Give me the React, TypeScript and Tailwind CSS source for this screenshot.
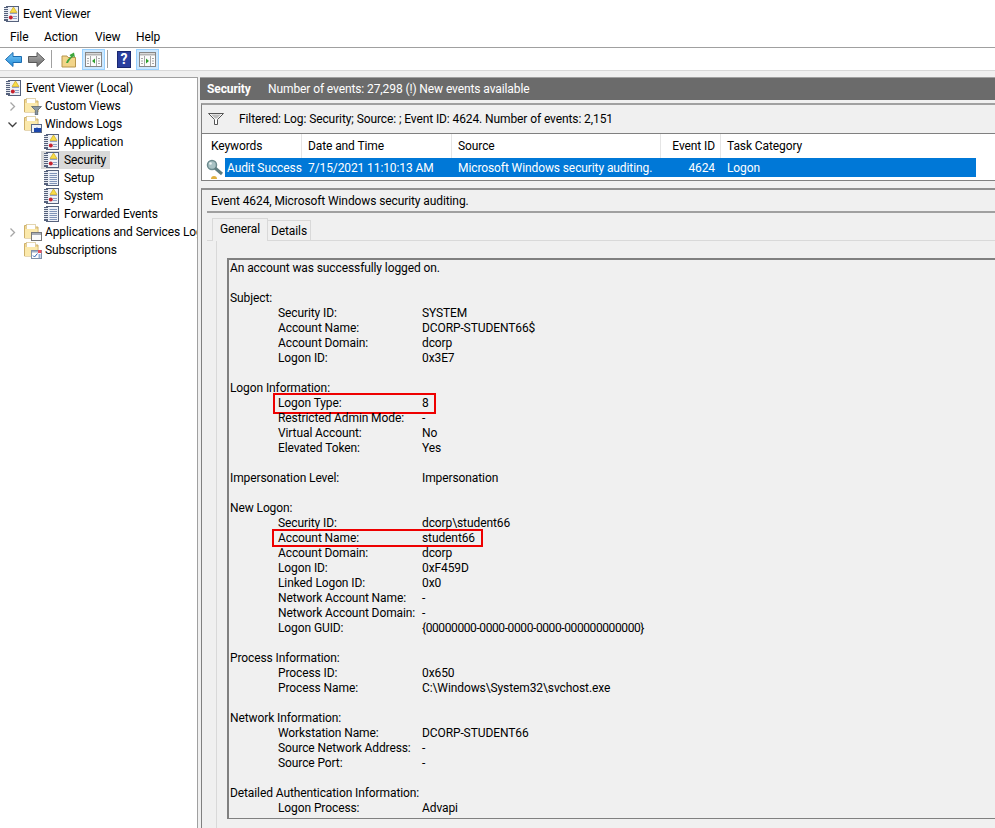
import type { ReactNode } from 'react'

const font = 'font-["Roboto","Noto_Sans",sans-serif]'

function LogBook({ alert = true }: { alert?: boolean }) {
  return (
    <svg width="15" height="16" viewBox="0 0 15 16" className="shrink-0">
      <rect x="2.500" y="0.500" width="12" height="15" fill="#eef1f7" stroke="#55617c" />
      <rect x="0" y="1" width="4" height="14" fill="#55617c" />
      <path d="M0 2.500h4M0 4.500h4M0 6.500h4M0 8.500h4M0 10.500h4M0 12.500h4" stroke="#e6e9ef" />
      {alert ? (
        <>
          <path d="M6 7.500h7M9 10.500h4M9 12.500h4" stroke="#93a3c4" />
          <path d="M9.500 1l3.500 5.500H6z" fill="#f8dc46" stroke="#c8a626" strokeWidth="0.700" />
          <circle cx="6.800" cy="11.500" r="2" fill="#c5222f" />
        </>
      ) : (
        <path d="M5.500 3.500h7.500M5.500 5.500h7.500M5.500 7.500h7.500M5.500 9.500h7.500M5.500 11.500h7.500M5.500 13.500h7.500" stroke="#7f93b8" />
      )}
    </svg>
  )
}

function Folder({ overlay }: { overlay: 'filter' | 'log' | 'window' | 'task' }) {
  return (
    <svg width="18" height="18" viewBox="0 0 18 18" className="shrink-0">
      <path d="M0.500 2.500h7l1 1.500h5.500v11H0.500z" fill="#f5d98e" stroke="#cdb06a" />
      <rect x="2.500" y="1.500" width="9" height="7" fill="#fff" stroke="#d8c48e" strokeWidth="0.700" />
      <rect x="1" y="6" width="12.500" height="9" fill="#fbe9ac" />
      {overlay === 'filter' && (
        <path d="M7.500 9.500h10l-3.800 3.800V18h-2.400v-4.700z" fill="#8b98a3" stroke="#4e5a66" strokeWidth="0.700" />
      )}
      {overlay === 'log' && (
        <>
          <rect x="7.500" y="9.500" width="10" height="8" fill="#f0f2f7" stroke="#5a6a88" />
          <path d="M10 17l3-5 3 5z" fill="#1c47ad" />
          <rect x="10" y="13" width="7" height="4" fill="#1c47ad" />
        </>
      )}
      {overlay === 'window' && (
        <>
          <rect x="7.500" y="9.500" width="10" height="8" fill="#fafafa" stroke="#777" />
          <rect x="8" y="10" width="9" height="2" fill="#a8adb5" />
        </>
      )}
      {overlay === 'task' && (
        <>
          <rect x="7.500" y="9.500" width="10" height="8" fill="#fff" stroke="#8090a8" />
          <rect x="8" y="10" width="6" height="1.500" fill="#9fb0c8" />
          <rect x="14" y="9" width="3.500" height="3" fill="#e8505c" />
          <path d="M9 14.500l1.500 1.500 3-3.500M14.500 14h2M14.500 16h2" stroke="#2a5fb0" fill="none" />
        </>
      )}
    </svg>
  )
}

function Chevron({ open }: { open?: boolean }) {
  return (
    <svg width="9" height="9" viewBox="0 0 9 9" className="shrink-0">
      {open ? (
        <path d="M0.500 2.500l4 4 4-4" stroke="#404040" strokeWidth="1.300" fill="none" />
      ) : (
        <path d="M2.500 0.500l4 4-4 4" stroke="#a6a6a6" strokeWidth="1.300" fill="none" />
      )}
    </svg>
  )
}

function PaneToggle({ arrow }: { arrow: 'left' | 'right' }) {
  return (
    <div className="w-[23px] h-[21px] flex items-center justify-center bg-[#cce8ff] border border-[#99d1ff]">
      <svg width="17" height="15" viewBox="0 0 17 15">
        <rect x="0.500" y="0.500" width="16" height="14" fill="#fbfbfb" stroke="#868686" />
        <path d="M1 2.500h15" stroke="#b4b4b4" strokeWidth="2" />
        <path d="M5.500 4v10M11.500 4v10" stroke="#a8a8a8" />
        {arrow === 'left' ? <path d="M10 6.500v5L7 9z" fill="#2ca02c" /> : <path d="M7 6.500v5L10 9z" fill="#2ca02c" />}
        <path d="M2 6.500h2M2 9h2M2 11.500h2M13 6.500h2M13 9h2M13 11.500h2" stroke="#a8a8a8" />
      </svg>
    </div>
  )
}

function FolderRow({ chevron, icon, label }: { chevron?: 'open' | 'closed'; icon: ReactNode; label: string }) {
  return (
    <div className="h-[18px] flex items-center whitespace-nowrap pl-[8px]">
      <div className="w-[16px] shrink-0">{chevron && <Chevron open={chevron === 'open'} />}</div>
      <div className="w-[21px] shrink-0">{icon}</div>
      <span>{label}</span>
    </div>
  )
}

function LogRow({ alert, label, selected }: { alert?: boolean; label: string; selected?: boolean }) {
  return (
    <div className="h-[18px] flex whitespace-nowrap pl-[41px]">
      <div className={`flex items-center pl-[3px] pr-[4px] ${selected ? 'bg-[#d9d9d9]' : ''}`}>
        <div className="w-[20px] shrink-0">
          <LogBook alert={alert} />
        </div>
        <span>{label}</span>
      </div>
    </div>
  )
}

type Line = { t?: string; k?: string; v?: string; box?: string; tight?: boolean }

const lines: Line[] = [
  { t: 'An account was successfully logged on.' },
  {},
  { t: 'Subject:' },
  { k: 'Security ID:', v: 'SYSTEM' },
  { k: 'Account Name:', v: 'DCORP-STUDENT66$' },
  { k: 'Account Domain:', v: 'dcorp' },
  { k: 'Logon ID:', v: '0x3E7' },
  {},
  { t: 'Logon Information:' },
  { k: 'Logon Type:', v: '8', box: 'left-[43px] w-[163px] -top-[3px] h-[21px]' },
  { k: 'Restricted Admin Mode:', v: '-' },
  { k: 'Virtual Account:', v: 'No' },
  { k: 'Elevated Token:', v: 'Yes' },
  {},
  { t: 'Impersonation Level:', v: 'Impersonation' },
  {},
  { t: 'New Logon:' },
  { k: 'Security ID:', v: 'dcorp\\student66' },
  { k: 'Account Name:', v: 'student66', box: 'left-[42px] w-[211px] -top-[2px] h-[18px]' },
  { k: 'Account Domain:', v: 'dcorp' },
  { k: 'Logon ID:', v: '0xF459D' },
  { k: 'Linked Logon ID:', v: '0x0' },
  { k: 'Network Account Name:', v: '-' },
  { k: 'Network Account Domain:', v: '-' },
  { k: 'Logon GUID:', v: '{00000000-0000-0000-0000-000000000000}', tight: true },
  {},
  { t: 'Process Information:' },
  { k: 'Process ID:', v: '0x650' },
  { k: 'Process Name:', v: 'C:\\Windows\\System32\\svchost.exe' },
  {},
  { t: 'Network Information:' },
  { k: 'Workstation Name:', v: 'DCORP-STUDENT66' },
  { k: 'Source Network Address:', v: '-' },
  { k: 'Source Port:', v: '-' },
  {},
  { t: 'Detailed Authentication Information:' },
  { k: 'Logon Process:', v: 'Advapi' },
]

export default function App() {
  return (
    <div className={`w-[995px] h-[828px] overflow-hidden bg-[#f0f0f0] text-[12px] tracking-[-0.1px] text-black flex flex-col ${font}`}>
      <div className="h-[27px] bg-white flex items-center pl-[4px] gap-[4px] shrink-0">
        <LogBook />
        <span>Event Viewer</span>
      </div>
      <div className="h-[20px] bg-white flex items-center pl-[10px] shrink-0">
        <span className="w-[34px]">File</span>
        <span className="w-[51px]">Action</span>
        <span className="w-[41px]">View</span>
        <span>Help</span>
      </div>
      <div className="h-[24px] bg-white border-t border-[#a0a0a0] border-b border-b-[#d8d8d8] flex items-center pl-[5px] shrink-0">
        <svg width="17" height="15" viewBox="0 0 17 15">
          <defs>
            <linearGradient id="backFill" x1="0" y1="0" x2="0" y2="1">
              <stop offset="0" stopColor="#7cc8f5" />
              <stop offset="1" stopColor="#1f8ad8" />
            </linearGradient>
          </defs>
          <path d="M8 0.500L0.500 7.500 8 14.500V10.500h8.500v-6H8z" fill="url(#backFill)" stroke="#1c6cb0" />
        </svg>
        <svg width="17" height="15" viewBox="0 0 17 15" className="ml-[6px]">
          <defs>
            <linearGradient id="forwardFill" x1="0" y1="0" x2="0" y2="1">
              <stop offset="0" stopColor="#b0b0b0" />
              <stop offset="1" stopColor="#6c6c6c" />
            </linearGradient>
          </defs>
          <path d="M9 0.500l7.500 7L9 14.500V10.500H0.500v-6H9z" fill="url(#forwardFill)" stroke="#595959" />
        </svg>
        <div className="w-px h-[18px] bg-[#a0a0a0] ml-[6px]" />
        <svg width="16" height="17" viewBox="0 0 16 17" className="ml-[9px]">
          <path d="M1 5h5l1 1.500h7.500V16H1z" fill="#f2d58a" stroke="#b8964c" />
          <path d="M5 12c1-3 2.500-5 5-6L8.500 4 13 1.500 14 6.500l-1.800-1C10 7.500 8 9.500 7 12z" fill="#3da63d" />
        </svg>
        <div className="ml-[5px]">
          <PaneToggle arrow="left" />
        </div>
        <div className="w-px h-[18px] bg-[#a0a0a0] ml-[2px]" />
        <div className="w-[14px] h-[17px] ml-[9px] bg-[#2b3f9e] border border-[#1a2870] text-white font-bold text-[14px] leading-[15px] text-center">?</div>
        <div className="ml-[5px]">
          <PaneToggle arrow="right" />
        </div>
      </div>

      <div className="flex-1 flex min-h-0 pt-[6px]">
        <div className="w-[198px] shrink-0 bg-white border-t border-r border-[#a0a0a0] pt-[1px] overflow-hidden">
          <div className="h-[18px] flex items-center whitespace-nowrap pl-[6px]">
            <div className="w-[20px] shrink-0">
              <LogBook />
            </div>
            <span>Event Viewer (Local)</span>
          </div>
          <FolderRow chevron="closed" icon={<Folder overlay="filter" />} label="Custom Views" />
          <FolderRow chevron="open" icon={<Folder overlay="log" />} label="Windows Logs" />
          <LogRow label="Application" />
          <LogRow label="Security" selected />
          <LogRow alert={false} label="Setup" />
          <LogRow label="System" />
          <LogRow alert={false} label="Forwarded Events" />
          <FolderRow chevron="closed" icon={<Folder overlay="window" />} label="Applications and Services Logs" />
          <FolderRow icon={<Folder overlay="task" />} label="Subscriptions" />
        </div>

        <div className="flex-1 min-w-0 ml-[2px] flex flex-col">
          <div className="h-[23px] bg-[#6b6b6b] border-t border-[#a0a0a0] text-white flex items-center pl-[7px] whitespace-nowrap shrink-0">
            <span className="font-bold w-[61px]">Security</span>
            <span>Number of events: 27,298 (!) New events available</span>
          </div>
          <div className="h-[78px] mt-[3px] border-t-2 border-[#a0a0a0] border-l border-l-[#808080] ml-[1px] flex flex-col shrink-0">
            <div className="h-[29px] flex items-center pl-[6px] border-b border-[#808080] shrink-0">
              <svg width="16" height="12" viewBox="0 0 16 12">
                <path d="M0.500 0.500h15L9.500 6.500v5h-3v-5z" fill="#fff" stroke="#555" />
                <path d="M3 1.500h10L9 5.500H7z" fill="#bdbdbd" />
              </svg>
              <span className="ml-[15px] whitespace-nowrap">Filtered: Log: Security; Source: ; Event ID: 4624. Number of events: 2,151</span>
            </div>
            <div className="flex-1 bg-white border-b border-[#808080] pl-[3px] overflow-hidden">
              <div className="h-[24px] flex items-center w-[771px]">
                <div className="w-[97px] h-full flex items-center pl-[6px] border-r border-[#e5e5e5]">Keywords</div>
                <div className="w-[150px] h-full flex items-center pl-[6px] border-r border-[#e5e5e5]">Date and Time</div>
                <div className="w-[209px] h-full flex items-center pl-[6px] border-r border-[#e5e5e5]">Source</div>
                <div className="w-[60px] h-full flex items-center justify-end pr-[5px] border-r border-[#e5e5e5]">Event ID</div>
                <div className="pl-[6px]">Task Category</div>
              </div>
              <div className="h-[19px] flex items-center relative w-[771px]">
                <svg width="20" height="24" viewBox="0 0 20 24" className="absolute left-0 top-[1px]">
                  <circle cx="7" cy="6" r="4.500" fill="#a9c2c4" stroke="#6d8b8e" strokeWidth="1.500" />
                  <circle cx="5.500" cy="4.500" r="1.300" fill="#eef4f4" />
                  <path d="M10 9l7 6" stroke="#5f7d80" strokeWidth="3" />
                  <path d="M6 20a3 3 0 0 1 6 0z" fill="#e0b040" />
                </svg>
                <div className="ml-[20px] flex-1 h-full bg-[#0078d7] text-white flex items-center whitespace-nowrap">
                  <span className="w-[77px] pl-[2px]">Audit Success</span>
                  <span className="w-[150px] pl-[6px]">7/15/2021 11:10:13 AM</span>
                  <span className="w-[209px] pl-[6px]">Microsoft Windows security auditing.</span>
                  <span className="w-[54px] text-right">4624</span>
                  <span className="pl-[12px]">Logon</span>
                </div>
              </div>
            </div>
          </div>
          <div className="flex-1 min-h-0 mt-[7px] ml-[1px] border-t-2 border-[#909090] border-l border-l-[#808080] pl-[5px] flex flex-col">
            <div className="h-[23px] flex items-center pl-[4px] border-b-2 border-[#a0a0a0] shrink-0 whitespace-nowrap">
              Event 4624, Microsoft Windows security auditing.
            </div>
            <div className="h-[28px] flex items-end pl-[5px] border-b border-[#d9d9d9] shrink-0">
              <div className="w-[56px] h-[23px] bg-[#f0f0f0] border border-b-0 border-[#d9d9d9] flex items-center justify-center -mb-px relative pb-[2px]">General</div>
              <div className="w-[43px] h-[20px] bg-[#f0f0f0] border border-l-0 border-b-0 border-[#d9d9d9] flex items-center justify-center">Details</div>
            </div>
            <div className="flex-1 min-h-0 ml-[9px] pl-[10px] pt-[17px] border-l border-[#d9d9d9]">
              <div className="border-t-2 border-l-2 border-b border-[#808080] pl-[1px] pt-[1px] h-[561px]">
                {lines.map((l, i) => (
                  <div key={i} className="h-[15px] leading-[15px] flex whitespace-nowrap relative">
                    {l.t ? <span className="w-[192px]">{l.t}</span> : l.k ? <span className="w-[192px] pl-[48px]">{l.k}</span> : null}
                    {l.v && <span className={l.tight ? 'tracking-[-0.4px]' : ''}>{l.v}</span>}
                    {l.box && <div className={`absolute border-2 border-[#ee0000] ${l.box}`} />}
                  </div>
                ))}
              </div>
            </div>
          </div>
        </div>
      </div>
    </div>
  )
}
